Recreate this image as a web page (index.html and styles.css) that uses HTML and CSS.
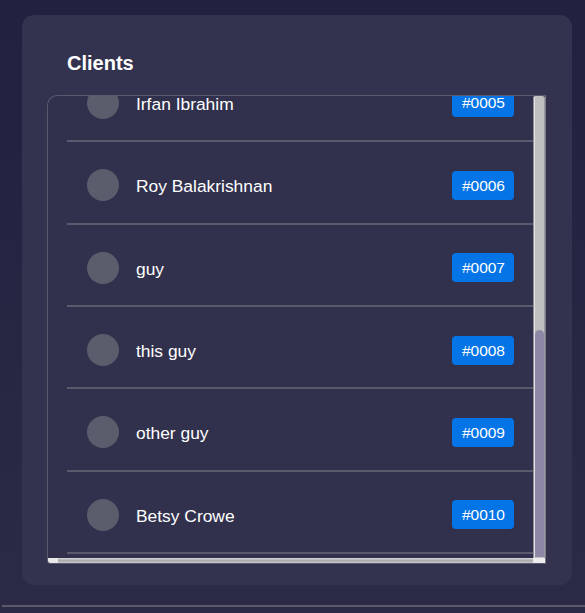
FILE: index.html
```html
<!DOCTYPE html>
<html lang="en">
<head>
<meta charset="utf-8">
<title>Clients</title>
<link rel="stylesheet" href="styles.css">
</head>
<body>
<div class="page">
  <section class="card">
    <h2 class="card-title">Clients</h2>
    <div class="list-frame">
      <div class="viewport">
        <ul class="client-list">
          <li class="client"><span class="avatar"></span><span class="name">Maya Fernandes</span><span class="badge">#0001</span></li>
          <li class="client"><span class="avatar"></span><span class="name">Daniel Okafor</span><span class="badge">#0002</span></li>
          <li class="client"><span class="avatar"></span><span class="name">Sophie Lambert</span><span class="badge">#0003</span></li>
          <li class="client"><span class="avatar"></span><span class="name">Kenji Watanabe</span><span class="badge">#0004</span></li>
          <li class="client"><span class="avatar"></span><span class="name">Irfan Ibrahim</span><span class="badge">#0005</span></li>
          <li class="client"><span class="avatar"></span><span class="name">Roy Balakrishnan</span><span class="badge">#0006</span></li>
          <li class="client"><span class="avatar"></span><span class="name">guy</span><span class="badge">#0007</span></li>
          <li class="client"><span class="avatar"></span><span class="name">this guy</span><span class="badge">#0008</span></li>
          <li class="client"><span class="avatar"></span><span class="name">other guy</span><span class="badge">#0009</span></li>
          <li class="client"><span class="avatar"></span><span class="name">Betsy Crowe</span><span class="badge">#0010</span></li>
        </ul>
      </div>
      <div class="vbar"><div class="vbar-thumb"></div></div>
      <div class="hbar"><div class="hbar-cap"></div></div>
      <div class="corner"></div>
    </div>
  </section>
</div>
<div class="rule"></div>
</body>
</html>
```

FILE: styles.css
```css
* { box-sizing: border-box; }

html, body {
  margin: 0;
  padding: 0;
}

body {
  height: 613px;
  overflow: hidden;
  background: linear-gradient(180deg, #212140 0%, #272744 60%, #2b2b48 100%);
  font-family: "Liberation Sans", Arial, sans-serif;
  color: #ffffff;
}

.page {
  padding: 15px 13px 0 22px;
}

.card {
  width: 550px;
  height: 570px;
  background: #33334f;
  border-radius: 12px;
  padding: 37px 26px 0 25px;
}

.card-title {
  margin: 0 0 20px 0;
  padding: 0 20px;
  font-size: 20px;
  line-height: 23px;
  font-weight: 700;
  color: #ffffff;
}

.list-frame {
  width: 499px;
  height: 469px;
  border: 1px solid #5a5a6f;
  border-right-color: #7c7c88;
  border-radius: 10px 0 0 4px;
  overflow: hidden;
  display: grid;
  grid-template-columns: 1fr 12px;
  grid-template-rows: 1fr 5px;
  background: #31314d;
}

.viewport {
  overflow-y: scroll;
  overflow-x: hidden;
  scrollbar-width: none;
  display: flex;
  flex-direction: column-reverse;
  min-height: 0;
}

.viewport::-webkit-scrollbar {
  display: none;
}

.vbar {
  display: flex;
  flex-direction: column;
  justify-content: flex-end;
  background: #c0c0c0;
  border-radius: 3px 3px 0 0;
  box-shadow: inset 1px 0 0 #8d8d96, inset 2px 0 0 #e4e4e4, inset -1px 0 0 #9a9aa2;
  padding: 0 1px 1px 2px;
}

.vbar-thumb {
  height: 227px;
  background: #8e88a6;
  border-radius: 6px 6px 0 0;
}

.hbar {
  display: flex;
  background: linear-gradient(180deg, #d8d8d8 0%, #a6a6ab 55%, #cfcfcf 100%);
}

.hbar-cap {
  width: 10px;
  background: #e8e8e8;
}

.corner {
  background: #ececec;
}

.client-list {
  flex-shrink: 0;
  list-style: none;
  margin: 0;
  padding: 112px 0 4px 19px;
}

.client {
  display: flex;
  align-items: center;
  padding: 27.2px 19px 21.2px 20px;
  border-bottom: 2px solid #595a6c;
}

.avatar {
  width: 32px;
  height: 32px;
  border-radius: 50%;
  background: #5b5c6c;
  flex-shrink: 0;
}

.name {
  margin-left: 17px;
  margin-top: 2px;
  font-size: 17.4px;
  line-height: 20px;
  color: #ffffff;
}

.badge {
  margin-left: auto;
  background: #0474e6;
  color: #ffffff;
  font-size: 15.5px;
  line-height: 19px;
  padding: 5px 9px 5px 10px;
  border-radius: 4px;
}

.rule {
  margin: 20px 0 0 2px;
  height: 2px;
  background: #5a5a6c;
}
```
